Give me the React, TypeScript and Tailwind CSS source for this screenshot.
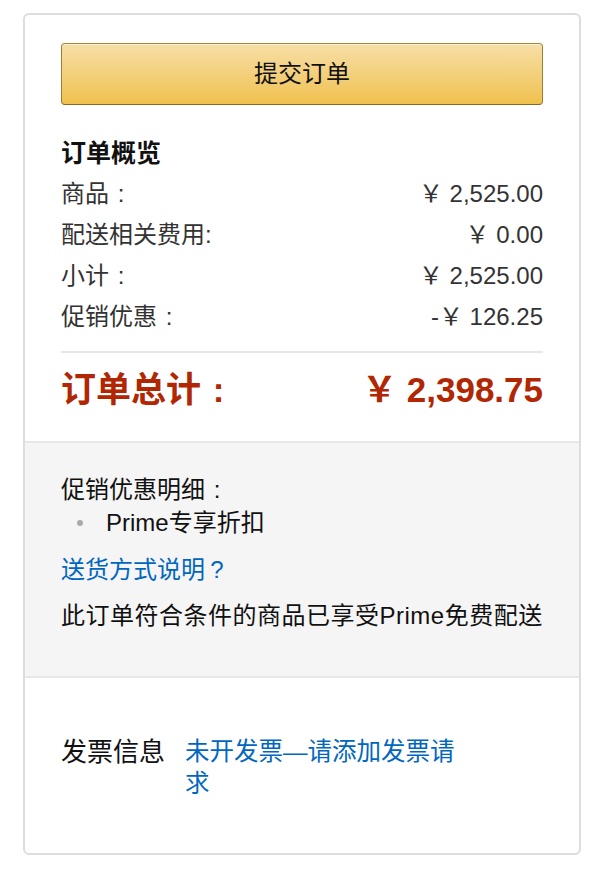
import React from "react";

const C = ({ ch = ":" }: { ch?: string }) => (
  <span className="inline-block w-[1em] text-center">{ch}</span>
);

const rows: [React.ReactNode, string][] = [
  [<>商品<C /></>, "￥ 2,525.00"],
  [<>配送相关费用:</>, "￥ 0.00"],
  [<>小计<C /></>, "￥ 2,525.00"],
  [<>促销优惠<C /></>, "-￥ 126.25"],
];

export default function App() {
  return (
    <div className="w-[600px] h-[871px] bg-white pt-[13px] pl-[23px] font-['Liberation_Sans','Noto_Sans_CJK_SC',sans-serif] text-[#111]">
      <div className="w-[558px] h-[842px] border-2 border-[#dddddd] rounded-[6px] flex flex-col overflow-hidden">
        <div className="px-[36px] pt-[28px] pb-[31px] border-b-2 border-[#e7e7e7]">
          <button className="w-full h-[62px] rounded-[4px] border border-t-[#a88734] border-x-[#9c7e31] border-b-[#846a29] bg-gradient-to-b from-[#f7dfa5] to-[#f0c14b] shadow-[inset_0_1px_0_rgba(255,255,255,0.6)] text-[24px] text-[#111] flex items-center justify-center">
            提交订单
          </button>
          <div className="mt-[30px] h-[36px] leading-[36px] text-[25px] font-bold text-[#111]">
            订单概览
          </div>
          <div className="mt-[2px]">
            {rows.map(([k, v], i) => (
              <div key={i} className="h-[41px] leading-[41px] text-[24px] text-[#333] flex justify-between">
                <span>{k}</span>
                <span>{v}</span>
              </div>
            ))}
          </div>
          <div className="mt-[14px] h-[2px] bg-[#e7e7e7]" />
          <div className="mt-[17px] h-[40px] leading-[40px] text-[35px] font-bold text-[#b12704] flex justify-between">
            <span>订单总计<C /></span>
            <span>￥ 2,398.75</span>
          </div>
        </div>
        <div className="bg-[#f5f5f5] px-[36px] pt-[30px] pb-[44px] border-b-2 border-[#e7e7e7] text-[24px] text-[#111]">
          <div className="h-[33px] leading-[33px]">促销优惠明细<C /></div>
          <div className="h-[33px] leading-[33px] flex items-center">
            <span className="ml-[16px] mr-[23px] w-[6px] h-[6px] rounded-full bg-[#aaaaaa]" />
            <span>Prime专享折扣</span>
          </div>
          <div className="mt-[14px] h-[33px] leading-[33px] text-[#0066c0]">送货方式说明<C ch="?" /></div>
          <div className="mt-[13px] h-[33px] leading-[33px] whitespace-nowrap tracking-[0.5px]">此订单符合条件的商品已享受Prime免费配送</div>
        </div>
        <div className="flex-1 px-[36px] pt-[58px]">
          <div className="flex leading-[32px]">
            <span className="w-[124px] text-[#111] text-[26px]">发票信息</span>
            <span className="w-[280px] text-[#0066c0] text-[24.5px]">未开发票—请添加发票请求</span>
          </div>
        </div>
      </div>
    </div>
  );
}
